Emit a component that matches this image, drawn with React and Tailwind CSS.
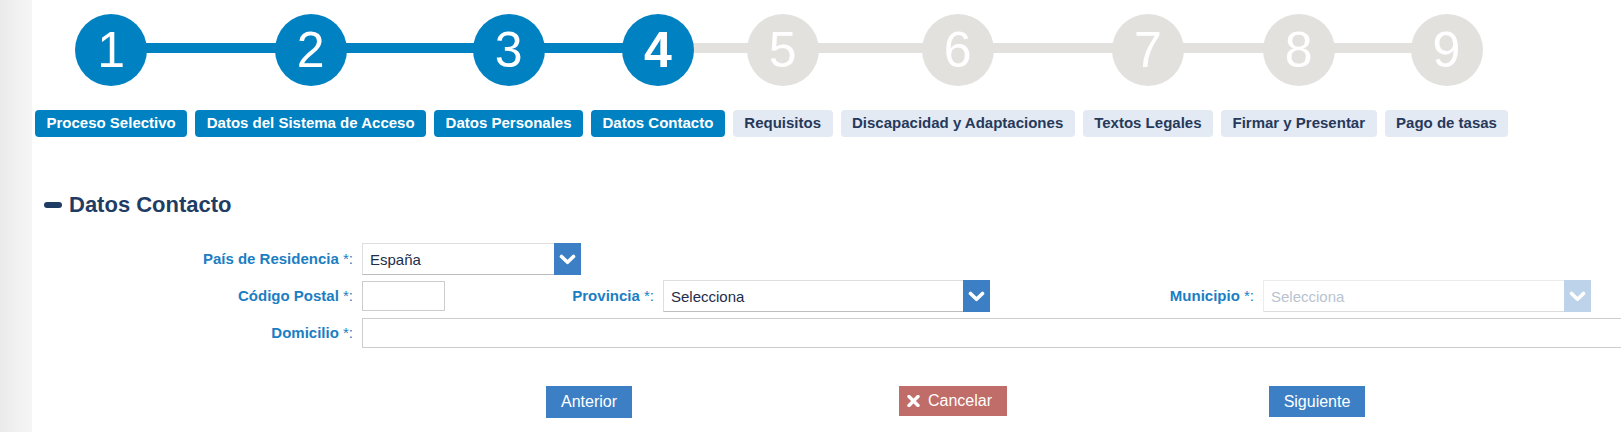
import React from "react";

const steps = [
  "Proceso Selectivo",
  "Datos del Sistema de Acceso",
  "Datos Personales",
  "Datos Contacto",
  "Requisitos",
  "Discapacidad y Adaptaciones",
  "Textos Legales",
  "Firmar y Presentar",
  "Pago de tasas",
];
const CURRENT = 4;

function Chevron() {
  return (
    <svg width="17" height="11" viewBox="0 0 17 11" fill="none">
      <path
        d="M2.5 2.5 L8.5 8.3 L14.5 2.5"
        stroke="#ffffff"
        strokeWidth="3.6"
        strokeLinecap="round"
        strokeLinejoin="round"
      />
    </svg>
  );
}

function Select({ width, value, disabled }) {
  return (
    <div className={`flex h-[32px] ${width}`}>
      <div
        className={`flex-1 flex items-center pl-[7px] pt-[2px] text-[15px] border-l border-t border-b ${
          disabled
            ? "border-[#ececec] border-b-[#dcdcdc] text-[#b9c3cf]"
            : "border-[#dedede] border-b-[#bdbdbd] text-[#1d2d4b]"
        }`}
      >
        {value}
      </div>
      <div
        className={`w-[27px] h-full flex items-center justify-center ${
          disabled ? "bg-[#bdd3ea]" : "bg-[#3c7fc5]"
        }`}
      >
        <Chevron />
      </div>
    </div>
  );
}

function Label({ children, width }) {
  return (
    <div className={`${width} shrink-0 text-right pr-[9px] text-[15px] font-bold text-[#1b7ec3]`}>
      {children}
      <span className="font-normal"> *:</span>
    </div>
  );
}

export default function App() {
  return (
    <div
      className="flex min-h-screen w-full overflow-hidden bg-white"
      style={{ fontFamily: '"Liberation Sans", Arial, sans-serif' }}
    >
      <div className="w-[32px] shrink-0 bg-gradient-to-r from-[#eaeaea] to-[#f6f6f6]" />
      <div className="flex-1 min-w-0 flex flex-col">
        {/* Steps */}
        <div className="flex gap-2 pl-[3px] pt-[14px]">
          {steps.map((s, i) => {
            const n = i + 1;
            const done = n <= CURRENT;
            const leftBlue = n <= CURRENT;
            const rightBlue = n < CURRENT;
            return (
              <div key={s} className="relative flex flex-col items-center">
                {n > 1 && (
                  <div
                    className={`absolute top-[29px] h-[10px] left-[-4px] right-1/2 ${
                      leftBlue ? "bg-[#0081c2]" : "bg-[#e2e1de]"
                    }`}
                  />
                )}
                {n < steps.length && (
                  <div
                    className={`absolute top-[29px] h-[10px] left-1/2 right-[-4px] ${
                      rightBlue ? "bg-[#0081c2]" : "bg-[#e2e1de]"
                    }`}
                  />
                )}
                <div
                  className={`relative z-10 w-[72px] h-[72px] rounded-full flex items-center justify-center text-white text-[50px] leading-none ${
                    done ? "bg-[#0081c2]" : "bg-[#e2e1de]"
                  } ${n === CURRENT ? "font-bold" : "font-normal"}`}
                >
                  {n}
                </div>
                <div
                  className={`mt-[24px] h-[27px] px-[11.5px] rounded-[4px] flex items-center text-[15px] font-bold whitespace-nowrap ${
                    done ? "bg-[#0081c2] text-white" : "bg-[#e3eaf3] text-[#26395b]"
                  }`}
                >
                  {s}
                </div>
              </div>
            );
          })}
        </div>

        {/* Heading */}
        <div className="mt-[55px] pl-[12px] flex items-center gap-[7px] h-[26px]">
          <div className="w-[18px] h-[6px] rounded-[3px] bg-[#1f3d64]" />
          <h2 className="text-[22px] font-bold text-[#1f3d64] leading-[26px]">Datos Contacto</h2>
        </div>

        {/* Form */}
        <div className="mt-[25px] flex flex-col">
          <div className="flex items-center h-[32px]">
            <Label width="w-[330px]">País de Residencia</Label>
            <Select width="w-[219px]" value="España" />
          </div>
          <div className="flex items-center h-[32px] mt-[5px]">
            <Label width="w-[330px]">Código Postal</Label>
            <div className="w-[83px] h-[30px] border border-[#cccccc] shrink-0" />
            <Label width="w-[218px]">Provincia</Label>
            <Select width="w-[327px]" value="Selecciona" />
            <Label width="w-[273px]">Municipio</Label>
            <Select width="w-[328px]" value="Selecciona" disabled />
          </div>
          <div className="flex items-center h-[30px] mt-[6px]">
            <Label width="w-[330px]">Domicilio</Label>
            <div className="w-[1300px] h-[30px] border border-[#cccccc] shrink-0" />
          </div>
        </div>

        {/* Buttons */}
        <div className="mt-[38px] ml-[375px] w-[1092px] grid grid-cols-3 items-start">
          <div className="flex justify-center">
            <button className="h-[32px] px-[15px] bg-[#3c7fc5] text-white text-[16px]">Anterior</button>
          </div>
          <div className="flex justify-center">
            <button className="h-[30px] pl-[8px] pr-[15px] bg-[#c06c68] text-white text-[16px] flex items-center gap-[8px]">
              <svg width="13" height="12" viewBox="0 0 13 12">
                <path d="M2 1.5 L11 10.5 M11 1.5 L2 10.5" stroke="#fff" strokeWidth="3.4" strokeLinecap="round" />
              </svg>
              Cancelar
            </button>
          </div>
          <div className="flex justify-center">
            <button className="h-[31px] px-[15px] bg-[#3c7fc5] text-white text-[16px]">Siguiente</button>
          </div>
        </div>
      </div>
    </div>
  );
}
